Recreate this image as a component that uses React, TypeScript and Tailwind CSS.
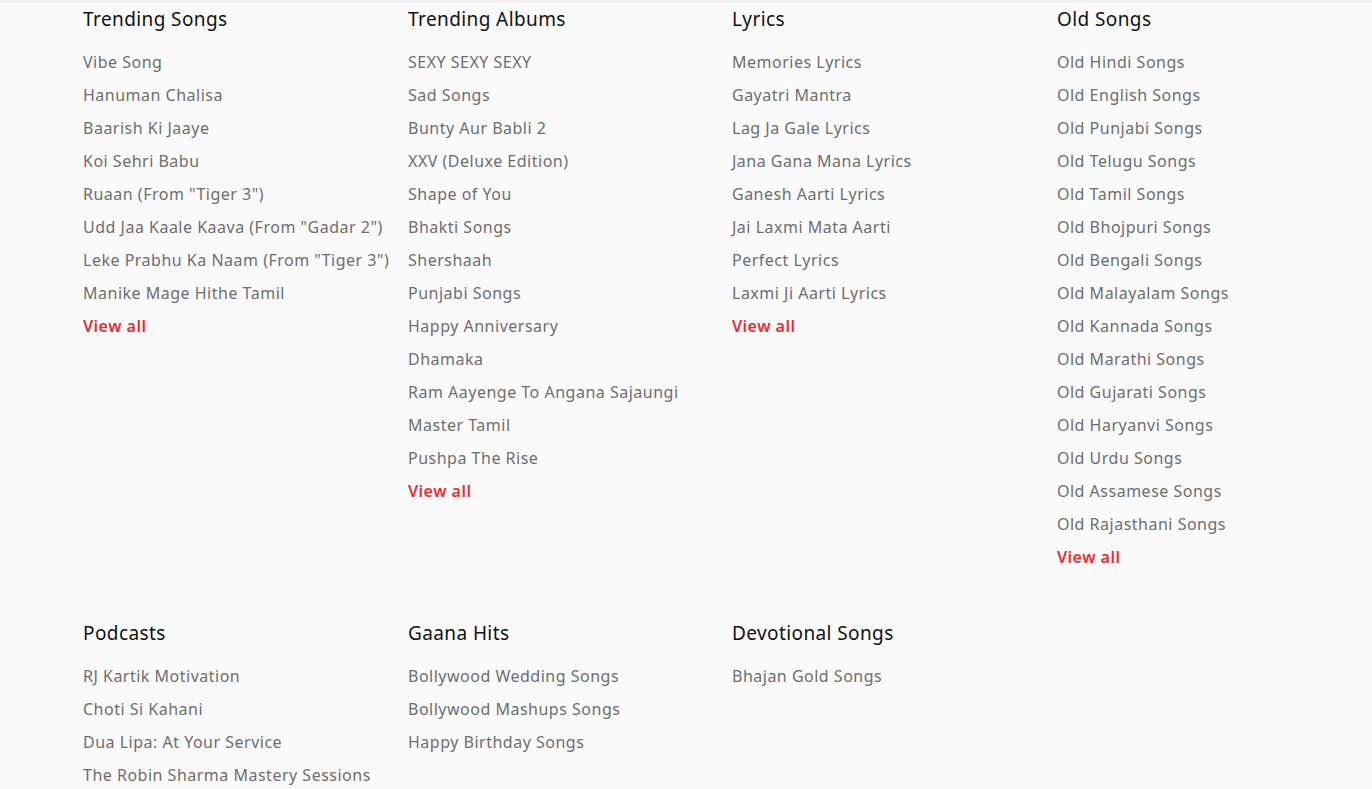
import React from 'react';

interface Section {
  title: string;
  items: string[];
  viewAll?: boolean;
}

const ROW_ONE: Section[] = [
  {
    title: 'Trending Songs',
    items: [
      'Vibe Song',
      'Hanuman Chalisa',
      'Baarish Ki Jaaye',
      'Koi Sehri Babu',
      'Ruaan (From "Tiger 3")',
      'Udd Jaa Kaale Kaava (From "Gadar 2")',
      'Leke Prabhu Ka Naam (From "Tiger 3")',
      'Manike Mage Hithe Tamil',
    ],
    viewAll: true,
  },
  {
    title: 'Trending Albums',
    items: [
      'SEXY SEXY SEXY',
      'Sad Songs',
      'Bunty Aur Babli 2',
      'XXV (Deluxe Edition)',
      'Shape of You',
      'Bhakti Songs',
      'Shershaah',
      'Punjabi Songs',
      'Happy Anniversary',
      'Dhamaka',
      'Ram Aayenge To Angana Sajaungi',
      'Master Tamil',
      'Pushpa The Rise',
    ],
    viewAll: true,
  },
  {
    title: 'Lyrics',
    items: [
      'Memories Lyrics',
      'Gayatri Mantra',
      'Lag Ja Gale Lyrics',
      'Jana Gana Mana Lyrics',
      'Ganesh Aarti Lyrics',
      'Jai Laxmi Mata Aarti',
      'Perfect Lyrics',
      'Laxmi Ji Aarti Lyrics',
    ],
    viewAll: true,
  },
  {
    title: 'Old Songs',
    items: [
      'Old Hindi Songs',
      'Old English Songs',
      'Old Punjabi Songs',
      'Old Telugu Songs',
      'Old Tamil Songs',
      'Old Bhojpuri Songs',
      'Old Bengali Songs',
      'Old Malayalam Songs',
      'Old Kannada Songs',
      'Old Marathi Songs',
      'Old Gujarati Songs',
      'Old Haryanvi Songs',
      'Old Urdu Songs',
      'Old Assamese Songs',
      'Old Rajasthani Songs',
    ],
    viewAll: true,
  },
];

const ROW_TWO: Section[] = [
  {
    title: 'Podcasts',
    items: [
      'RJ Kartik Motivation',
      'Choti Si Kahani',
      'Dua Lipa: At Your Service',
      'The Robin Sharma Mastery Sessions',
    ],
  },
  {
    title: 'Gaana Hits',
    items: ['Bollywood Wedding Songs', 'Bollywood Mashups Songs', 'Happy Birthday Songs'],
  },
  {
    title: 'Devotional Songs',
    items: ['Bhajan Gold Songs'],
  },
];

const LinkColumn: React.FC<{ section: Section }> = ({ section }) => (
  <div className="flex flex-col">
    <h3 className="text-[19px] leading-[24px] text-[#111] font-normal tracking-[0.4px] mb-[15px] whitespace-nowrap">
      {section.title}
    </h3>
    <ul className="flex flex-col">
      {section.items.map((item) => (
        <li key={item} className="h-[33px] leading-[33px] text-[16px] text-[#6e6e6e] tracking-[0.5px] whitespace-nowrap">
          <a href="#" className="hover:text-[#e72c30]">{item}</a>
        </li>
      ))}
      {section.viewAll && (
        <li className="h-[33px] leading-[33px] text-[16px] text-[#e72c30] font-semibold tracking-[0.5px]">
          <a href="#">View all</a>
        </li>
      )}
    </ul>
  </div>
);

export default function App() {
  return (
    <div
      className="min-h-[789px] bg-[#fafafa] overflow-hidden"
      style={{ fontFamily: '"Noto Sans", "Open Sans", Arial, sans-serif' }}
    >
      <div className="h-[3px] bg-[#f2f2f2]" />
      <div className="pl-[83px] pt-[4px]">
        <div className="grid grid-cols-[325px_324px_325px_325px] items-start">
          {ROW_ONE.map((s) => (
            <LinkColumn key={s.title} section={s} />
          ))}
        </div>
        <div className="grid grid-cols-[325px_324px_325px_325px] items-start mt-[47px]">
          {ROW_TWO.map((s) => (
            <LinkColumn key={s.title} section={s} />
          ))}
        </div>
      </div>
    </div>
  );
}
